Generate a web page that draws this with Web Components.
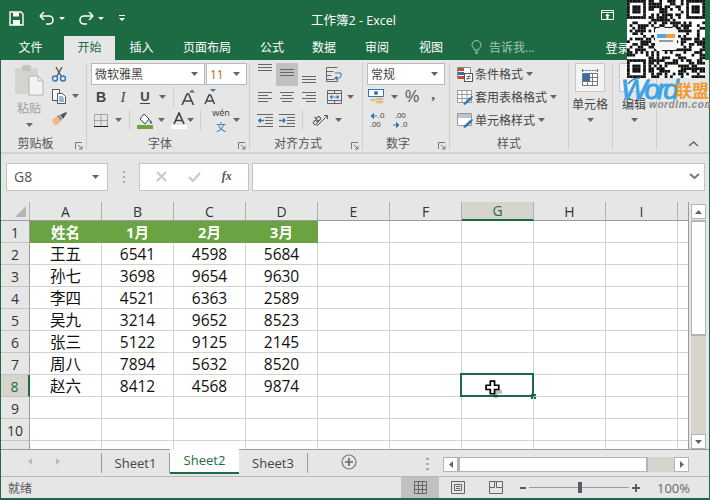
<!DOCTYPE html>
<html>
<head>
<meta charset="utf-8">
<title>工作簿2 - Excel</title>
<style>
  html, body { margin: 0; padding: 0; background: #e6e6e6; }
  body { width: 710px; height: 500px; overflow: hidden; font-family: "Open Sans", "Noto Sans CJK SC", sans-serif; }
</style>
</head>
<body>
<excel-window></excel-window>
<script>
const CJK = '"Open Sans", "Noto Sans CJK SC", sans-serif';

const ICONS = {
  paste: `<svg width="30" height="32" viewBox="0 0 30 32"><rect x="1" y="4" width="23" height="26" rx="2" fill="#d4d4cc"/><rect x="8" y="1" width="9" height="6" rx="1.5" fill="#c4c4bc"/><path d="M15 12h9l5 5v14H15z" fill="#f2f2f2" stroke="#b8b0b8"/><path d="M24 12v5h5" fill="none" stroke="#b8b0b8"/></svg>`,
  cut: `<svg width="16" height="16" viewBox="0 0 16 16"><path d="M5 1l5 9M11 1L6 10" stroke="#555" stroke-width="1.4" fill="none"/><circle cx="4" cy="12.5" r="2.5" fill="none" stroke="#2f77b5" stroke-width="1.4"/><circle cx="12" cy="12.5" r="2.5" fill="none" stroke="#2f77b5" stroke-width="1.4"/></svg>`,
  copy: `<svg width="16" height="16" viewBox="0 0 16 16"><path d="M1.5 1.5h7v11h-7z" fill="#fff" stroke="#555"/><path d="M6.5 5.5h5l3 3v7h-8z" fill="#fff" stroke="#555"/><path d="M8 9h4M8 11h5M8 13h5" stroke="#3a6ea5"/></svg>`,
  brush: `<svg width="17" height="15" viewBox="0 0 17 15"><path d="M1 9l5-4 4 5-4 4H3z" fill="#e9bd7c"/><path d="M6 5l2-1 3 4-1 2z" fill="#888"/><path d="M9 4l6-3 1 1-4 6z" fill="#555"/></svg>`,
  launcher: `<svg width="8" height="8" viewBox="0 0 8 8"><path d="M.5 7V.5H7" fill="none" stroke="#777"/><path d="M3 3l4 4M7 4v3H4" fill="none" stroke="#777"/></svg>`,
  caret: `<svg width="7" height="4" viewBox="0 0 7 4"><path d="M0 0h7L3.500 4z" fill="#666"/></svg>`,
  bold: `<span style="font:700 14px 'Liberation Sans',sans-serif;color:#444">B</span>`,
  italic: `<span style="font:italic 400 15px 'Liberation Serif',serif;color:#444">I</span>`,
  under: `<span style="font:700 13px 'Liberation Sans',sans-serif;color:#444;border-bottom:1.5px solid #444;line-height:13px">U</span>`,
  growA: `<svg width="16" height="17" viewBox="0 0 16 17"><path d="M1 16L6 5h1.500l5 11M3 12h7.500" fill="none" stroke="#444" stroke-width="1.600"/><path d="M8 3l3-3 3 3z" transform="translate(0 .5)" fill="#2f77b5"/></svg>`,
  shrinkA: `<svg width="14" height="16" viewBox="0 0 14 16"><path d="M1 15L5 6h1.500l4 9M2.500 12h6" fill="none" stroke="#444" stroke-width="1.500"/><path d="M6 0h6L9 3z" fill="#2f77b5"/></svg>`,
  borders: `<svg width="14" height="13" viewBox="0 0 14 13"><path d="M.5.500h13v12H.500zM7 .500v12M.500 6.500h13" fill="none" stroke="#666" stroke-dasharray="1 1"/><path d="M0 12.500h14" stroke="#222"/></svg>`,
  fill: `<svg width="16" height="17" viewBox="0 0 16 17"><path d="M3 7l4-5 5 5-4 5z" fill="#fff" stroke="#444"/><path d="M12 7c2 1 3 3 3 4 0 1-2 1-2 0z" fill="#3a6ea5"/><rect x="0" y="13" width="16" height="4" fill="#70a440"/></svg>`,
  fontA: `<svg width="16" height="17" viewBox="0 0 16 17"><path d="M3 12L8 1l5 11M4.500 8.500h7" fill="none" stroke="#444" stroke-width="1.700"/><rect y="13" width="16" height="4" fill="#fff"/></svg>`,
  wen: `<span style="display:flex;flex-direction:column;align-items:center;line-height:9px"><span style="font:9px 'Noto Sans',sans-serif;color:#444">wén</span><span style="font:10px 'Noto Sans CJK SC';color:#2f77b5">文</span></span>`,
  alignTop: `<svg width="14" height="12" viewBox="0 0 14 12"><path d="M0 .500h14M0 3.500h14M0 6.500h14" stroke="#666"/></svg>`,
  alignMid: `<svg width="14" height="10" viewBox="0 0 14 10"><path d="M0 .500h14M0 3.500h14M0 6.500h14" stroke="#666"/></svg>`,
  alignBot: `<svg width="14" height="8" viewBox="0 0 14 8"><path d="M0 .500h14M0 3.500h14M0 6.500h14" stroke="#666"/></svg>`,
  left: `<svg width="14" height="10" viewBox="0 0 14 10"><path d="M0 .500h14M0 3.500h10M0 6.500h14M0 9.500h10" stroke="#666"/></svg>`,
  center: `<svg width="14" height="10" viewBox="0 0 14 10"><path d="M0 .500h14M2 3.500h10M0 6.500h14M2 9.500h10" stroke="#666"/></svg>`,
  right: `<svg width="14" height="10" viewBox="0 0 14 10"><path d="M0 .500h14M4 3.500h10M0 6.500h14M4 9.500h10" stroke="#666"/></svg>`,
  wrap: `<svg width="16" height="15" viewBox="0 0 16 15"><path d="M.5.500h11M.500 4.500h7M.500 8.500h5M.500 12.500h8M.500.500v14h11v-3" fill="none" stroke="#666"/><path d="M9 6h6v3a2 2 0 0 1-2 2H9" fill="none" stroke="#2f77b5"/><path d="M11 9l-3 2 3 2z" fill="#2f77b5"/></svg>`,
  merge: `<svg width="15" height="14" viewBox="0 0 15 14"><path d="M.5.500h14v13H.500zM.500 3.500h14M.500 10.500h14M7.500.5v3M7.500 10.500v3" fill="none" stroke="#666"/><path d="M3 7h9M3 7l2-1.500v3zM12 7l-2-1.500v3z" fill="#2f77b5" stroke="#2f77b5" stroke-width=".7"/></svg>`,
  outdent: `<svg width="16" height="13" viewBox="0 0 16 13"><path d="M0 .500h16M8 3.500h8M8 6.500h8M8 9.500h8M0 12.500h16" stroke="#666"/><path d="M1 6.500h6" stroke="#2f77b5" stroke-width="1.500"/><path d="M1 6.500l3-3v6z" fill="#2f77b5"/></svg>`,
  indent: `<svg width="16" height="13" viewBox="0 0 16 13"><path d="M0 .500h16M8 3.500h8M8 6.500h8M8 9.500h8M0 12.500h16" stroke="#666"/><path d="M0 6.500h6" stroke="#2f77b5" stroke-width="1.500"/><path d="M7 6.500l-3-3v6z" fill="#2f77b5"/></svg>`,
  orient: `<svg width="18" height="15" viewBox="0 0 18 15"><g transform="rotate(-40 6 7)" fill="none" stroke="#555"><circle cx="3" cy="8" r="2"/><path d="M6 3v7M6 7a2 2 0 1 1 4 0 2 2 0 1 1-4 0" /></g><path d="M6 13L16 3M13 2.500h3.500V6" fill="none" stroke="#555"/></svg>`,
  money: `<svg width="17" height="17" viewBox="0 0 17 17"><rect x=".5" y=".5" width="15" height="7" fill="#fff" stroke="#2f77b5"/><circle cx="8" cy="4" r="2" fill="#2f77b5"/><ellipse cx="11.500" cy="10" rx="4" ry="1.500" fill="#e9bd7c"/><ellipse cx="11.500" cy="13" rx="4" ry="1.500" fill="#e9bd7c"/><ellipse cx="5" cy="11" rx="3" ry="1.300" fill="#e9bd7c"/></svg>`,
  percent: `<span style="font:16px 'Liberation Sans',sans-serif;color:#555">%</span>`,
  comma: `<span style="font:700 15px 'Liberation Serif',serif;color:#6a4a6a;line-height:12px;padding-bottom:6px">,</span>`,
  decUp: `<span style="display:grid;grid-template-columns:auto auto;font:8px/9px 'Liberation Sans',sans-serif;color:#444;align-items:center"><svg width="7" height="6" viewBox="0 0 7 6"><path d="M1 3h6M1 3l2.500-2.500v5z" fill="#2f77b5" stroke="#2f77b5"/></svg><span style="padding-left:1px">.0</span><span style="grid-column:1/3">.00</span></span>`,
  decDown: `<span style="display:grid;grid-template-columns:auto auto;font:8px/9px 'Liberation Sans',sans-serif;color:#444;align-items:center"><span style="grid-column:1/3;padding-left:2px">.00</span><svg width="7" height="6" viewBox="0 0 7 6"><path d="M0 3h6M6 3L3.500.5v5z" fill="#2f77b5" stroke="#2f77b5"/></svg><span style="padding-left:1px">.0</span></span>`,
  cond: `<svg width="16" height="15" viewBox="0 0 16 15"><path d="M.5.500h13v11H.500z" fill="#fff" stroke="#888"/><path d="M1 1h6v3H1z" fill="#c0503a"/><path d="M1 5h6v3H1z" fill="#3a6ea5"/><path d="M1 9h6v3H1z" fill="#c0503a"/><rect x="7.500" y="6.500" width="8" height="8" fill="#fff" stroke="#555"/><path d="M9.500 9.500h4M9.500 11.500h4M10 13l3-5" stroke="#444" stroke-width=".7"/></svg>`,
  table: `<svg width="16" height="15" viewBox="0 0 16 15"><path d="M.5.500h14v12H.500zM5 .500v12M10 .500v12M.500 4.500h14M.500 8.500h14" fill="#fff" stroke="#999"/><path d="M6 14l6-6 3-2 1 1-2 3-6 5z" fill="#2f77b5"/></svg>`,
  cellstyle: `<svg width="16" height="15" viewBox="0 0 16 15"><path d="M.5.500h14v12H.500z" fill="#fff" stroke="#999"/><path d="M1 1h13v4H1z" fill="#b8c4d0"/><path d="M6 14l6-6 3-2 1 1-2 3-6 5z" fill="#2f77b5"/></svg>`,
  cells: `<svg width="20" height="19" viewBox="0 0 20 19"><path d="M2.500 1v3M17.500 1v3" stroke="#2f77b5"/><path d="M2.500 2.500h15" stroke="#2f77b5" stroke-dasharray="2 1"/><path d="M2.500 5.500h15v12h-15zM2.500 9.500h15M2.500 13.500h15M7.500 5.500v12M12.500 5.500v12" fill="#fff" stroke="#777"/><rect x="3" y="6" width="7" height="7" fill="#3a6ea5"/></svg>`,
  up: `<svg width="11" height="6" viewBox="0 0 11 6"><path d="M1 5l4.500-4L10 5" fill="none" stroke="#666" stroke-width="1.500"/></svg>`
};

// small icon cell used all over the ribbon
class RbBtn extends HTMLElement {
  connectedCallback() {
    const w = this.getAttribute('w') || 22;
    const h = this.getAttribute('h') || 22;
    this.attachShadow({ mode: 'open' }).innerHTML = `
      <style>
        :host { display: flex; align-items: center; justify-content: center; width: ${w}px; height: ${h}px; flex: none; }
        :host([on]) { background: #c0c0c0; }
        svg { display: block; }
      </style>${ICONS[this.getAttribute('icon')]}`;
  }
}
customElements.define('rb-btn', RbBtn);

class RbGroup extends HTMLElement {
  connectedCallback() {
    const launcher = this.hasAttribute('launcher');
    this.attachShadow({ mode: 'open' }).innerHTML = `
      <style>
        :host { display: flex; flex-direction: column; flex: none; box-sizing: border-box; width: ${this.getAttribute('w')}px; height: 87px; border-right: 1px solid #cfcfc9; position: relative; }
        .body { flex: 1; min-height: 0; }
        .label { height: 16px; line-height: 19px; font-size: 12px; color: #555; text-align: center; display: flex; justify-content: center; position: relative; padding-right: ${launcher ? 16 : 0}px; box-sizing: border-box; }
        .launch { position: absolute; right: 3px; top: 8px; display: flex; }
      </style>
      <div class="body"><slot></slot></div>
      <div class="label">${this.getAttribute('label') || ''}
        ${launcher ? `<span class="launch">${ICONS.launcher}</span>` : ''}
      </div>`;
  }
}
customElements.define('rb-group', RbGroup);

class RbCombo extends HTMLElement {
  connectedCallback() {
    this.attachShadow({ mode: 'open' }).innerHTML = `
      <style>
        :host { display: flex; align-items: center; box-sizing: border-box; height: 22px; width: ${this.getAttribute('w')}px; background: #fff; border: 1px solid #b9b9b9; padding: 0 6px 0 3px; font-size: 12px; color: #444; flex: none; }
        span { flex: 1; white-space: nowrap; }
      </style>
      <span><slot></slot></span>${ICONS.caret}`;
  }
}
customElements.define('rb-combo', RbCombo);

class XRibbon extends HTMLElement {
  connectedCallback() {
    this.attachShadow({ mode: 'open' }).innerHTML = `
      <style>
        :host { display: flex; height: 94px; box-sizing: border-box; background: #e6e6e6; border-bottom: 2px solid #d2d2d2; padding-top: 3px; position: relative; font-family: ${CJK}; }
        .row { display: flex; align-items: center; height: 22px; }
        .sep { width: 1px; height: 20px; background: #cfcfc9; flex: none; }
        .cr { width: 12px; flex: none; display: flex; justify-content: center; }
        .txt { font-size: 12px; color: #444; white-space: nowrap; }
        .clip { display: flex; padding-left: 13px; }
        .pastecol { width: 30px; display: flex; flex-direction: column; align-items: center; }
        .pastecol .txt { color: #a0a0a0; margin-top: 4px; line-height: 16px; }
        .big { display: flex; flex-direction: column; align-items: center; padding-right: 1px; }
        .bigbox { width: 30px; height: 29px; background: #f4f4f4; border: 1px solid #c6c6c6; box-sizing: border-box; display: flex; align-items: center; justify-content: center; }
        .big .txt { margin-top: 5px; line-height: 16px; }
        .big .cr { margin-top: 5px; width: auto; }
        .up { position: absolute; right: 10px; bottom: 5px; display: flex; }
      </style>
      <rb-group w="86" label="剪贴板" launcher style="margin-left:0">
        <div class="clip">
          <div class="pastecol">
            <rb-btn icon="paste" w="30" h="34"></rb-btn>
            <span class="txt">粘贴</span>
            <span class="cr" style="margin-top:6px">${ICONS.caret}</span>
          </div>
          <div style="margin-left:5px">
            <rb-btn icon="cut" w="20" h="23" style="margin-top:-1px"></rb-btn>
            <div class="row"><rb-btn icon="copy" w="20"></rb-btn><span class="cr">${ICONS.caret}</span></div>
            <rb-btn icon="brush" w="20"></rb-btn>
          </div>
        </div>
      </rb-group>
      <rb-group w="163" label="字体" launcher>
        <div class="row" style="padding-left:4px">
          <rb-combo w="114">微软雅黑</rb-combo>
          <rb-combo w="41" style="margin-left:1px;color:#b06a20">11</rb-combo>
        </div>
        <div class="row" style="padding-left:3px;margin-top:1px">
          <rb-btn icon="bold"></rb-btn><rb-btn icon="italic"></rb-btn><rb-btn icon="under"></rb-btn>
          <span class="cr">${ICONS.caret}</span>
          <span class="sep" style="margin:0 0 0 5px"></span>
          <rb-btn icon="growA" w="30"></rb-btn><rb-btn icon="shrinkA" w="14"></rb-btn>
        </div>
        <div class="row" style="padding-left:3px;margin-top:1px">
          <rb-btn icon="borders"></rb-btn><span class="cr">${ICONS.caret}</span>
          <span class="sep" style="margin:0 4px 0 5px"></span>
          <rb-btn icon="fill"></rb-btn><span class="cr" style="margin-left:-1px">${ICONS.caret}</span>
          <rb-btn icon="fontA" style="margin-left:1px"></rb-btn><span class="cr" style="margin-left:-6px">${ICONS.caret}</span>
          <span class="sep" style="margin:0 10px 0 4px"></span>
          <rb-btn icon="wen" w="20"></rb-btn><span class="cr" style="margin-left:-1px">${ICONS.caret}</span>
        </div>
      </rb-group>
      <rb-group w="113" label="对齐方式" launcher>
        <div class="row" style="padding-left:4px">
          <rb-btn icon="alignTop" style="align-items:flex-start;height:20px"></rb-btn>
          <rb-btn icon="alignMid" on style="height:23px"></rb-btn>
          <rb-btn icon="alignBot" style="align-items:flex-end;height:19px"></rb-btn>
          <rb-btn icon="wrap" w="16" style="margin-left:6px"></rb-btn>
        </div>
        <div class="row" style="padding-left:4px;margin-top:1px">
          <rb-btn icon="left"></rb-btn><rb-btn icon="center"></rb-btn><rb-btn icon="right"></rb-btn>
          <rb-btn icon="merge" w="16" style="margin-left:6px"></rb-btn><span class="cr" style="margin-left:2px">${ICONS.caret}</span>
        </div>
        <div class="row" style="padding-left:4px;margin-top:1px">
          <rb-btn icon="outdent"></rb-btn><rb-btn icon="indent"></rb-btn>
          <span class="sep" style="margin-left:4px"></span>
          <rb-btn icon="orient" w="26" style="margin-left:4px"></rb-btn><span class="cr" style="margin-left:-1px">${ICONS.caret}</span>
        </div>
      </rb-group>
      <rb-group w="87" label="数字" launcher>
        <div class="row" style="padding-left:4px"><rb-combo w="78">常规</rb-combo></div>
        <div class="row" style="padding-left:4px;margin-top:1px">
          <rb-btn icon="money" w="18"></rb-btn><span class="cr" style="margin-left:3px">${ICONS.caret}</span>
          <rb-btn icon="percent" style="margin-left:1px"></rb-btn><rb-btn icon="comma" w="20"></rb-btn>
        </div>
        <div class="row" style="padding-left:3px;margin-top:1px">
          <rb-btn icon="decUp"></rb-btn><rb-btn icon="decDown" style="margin-left:1px"></rb-btn>
        </div>
      </rb-group>
      <rb-group w="119" label="样式">
        <div class="row" style="padding-left:5px"><rb-btn icon="cond" w="20"></rb-btn><span class="txt">条件格式</span><span class="cr">${ICONS.caret}</span></div>
        <div class="row" style="padding-left:5px;margin-top:1px"><rb-btn icon="table" w="20"></rb-btn><span class="txt">套用表格格式</span><span class="cr">${ICONS.caret}</span></div>
        <div class="row" style="padding-left:5px;margin-top:1px"><rb-btn icon="cellstyle" w="20"></rb-btn><span class="txt">单元格样式</span><span class="cr">${ICONS.caret}</span></div>
      </rb-group>
      <rb-group w="44">
        <div class="big"><div class="bigbox"><rb-btn icon="cells" w="22" h="22"></rb-btn></div><span class="txt">单元格</span><span class="cr">${ICONS.caret}</span></div>
      </rb-group>
      <rb-group w="44">
        <div class="big"><div class="bigbox"></div><span class="txt">编辑</span><span class="cr">${ICONS.caret}</span></div>
      </rb-group>
      <span class="up">${ICONS.up}</span>`;
  }
}
customElements.define('x-ribbon', XRibbon);

class XTitlebar extends HTMLElement {
  connectedCallback() {
    this.attachShadow({ mode: 'open' }).innerHTML = `
      <style>
        :host { display: flex; align-items: center; height: 36px; background: #1d6b43; color: #fff; font-family: ${CJK}; position: relative; flex: none; }
        .qa { display: flex; align-items: center; padding-left: 8px; }
        .title { position: absolute; left: 0; right: 0; top: 10px; text-align: center; font-size: 12.500px; padding-right: 3px; }
        svg { display: block; }
        .restore { position: absolute; left: 600px; top: 10px; }
      </style>
      <div class="qa">
        <svg width="15" height="15" viewBox="0 0 15 15"><path d="M1 1h11l2 2v11H1z" fill="none" stroke="#fff" stroke-width="1.400"/><path d="M4 1.500h6v4H4zM4 9h7v5H4z" fill="#fff"/></svg>
        <svg style="margin-left:15px" width="16" height="14" viewBox="0 0 16 14"><path d="M2 5h8a4 4 0 0 1 0 8H7" fill="none" stroke="#fff" stroke-width="1.600"/><path d="M1 5l4-4M1 5l4 4" stroke="#fff" stroke-width="1.600"/></svg>
        <svg style="margin-left:4px" width="6" height="3" viewBox="0 0 6 3"><path d="M0 0h6L3 3z" fill="#fff"/></svg>
        <svg style="margin-left:13px" width="16" height="14" viewBox="0 0 16 14"><path d="M14 5H6a4 4 0 0 0 0 8h3" fill="none" stroke="#fff" stroke-width="1.600"/><path d="M15 5l-4-4M15 5l-4 4" stroke="#fff" stroke-width="1.600"/></svg>
        <svg style="margin-left:4px" width="6" height="3" viewBox="0 0 6 3"><path d="M0 0h6L3 3z" fill="#fff"/></svg>
        <svg style="margin-left:15px" width="6" height="7" viewBox="0 0 6 7"><path d="M0 .500h6" stroke="#fff"/><path d="M0 3h6L3 6z" fill="#fff"/></svg>
      </div>
      <div class="title">工作簿2 - Excel</div>
      <svg class="restore" width="13" height="10" viewBox="0 0 13 10"><path d="M.5.500h12v9H.500zM.500 2.500h12" fill="none" stroke="#fff"/><path d="M6.500 3.500l2.500 2.500H7.500v3h-2V6H4z" fill="#fff"/></svg>`;
  }
}
customElements.define('x-titlebar', XTitlebar);

class XTabs extends HTMLElement {
  connectedCallback() {
    const tabs = [['文件', 62, 0, 5], ['开始', 51, 1], ['插入', 53], ['页面布局', 78], ['公式', 52], ['数据', 52], ['审阅', 54], ['视图', 54]];
    this.attachShadow({ mode: 'open' }).innerHTML = `
      <style>
        :host { display: flex; height: 24px; background: #1d6b43; color: #fff; font-family: ${CJK}; font-size: 12px; flex: none; padding-left: 1px; }
        .t { display: flex; align-items: center; justify-content: center; flex: none; padding-bottom: 2px; box-sizing: border-box; }
        .t.on { background: #e6e6e6; color: #1d6b43; }
        .tell { display: flex; align-items: center; color: #a9c6b5; margin-left: 13px; padding-bottom: 2px; }
        .tell span { margin-left: 7px; }
        .login { margin-left: 71px; padding-top: 3px; }
      </style>
      ${tabs.map(t => `<div class="t${t[2] ? ' on' : ''}" style="width:${t[1]}px;padding-right:${t[3] || 0}px">${t[0]}</div>`).join('')}
      <div class="tell">
        <svg width="11" height="14" viewBox="0 0 11 14"><path d="M3.500 10C3 8 1 7 1 5a4.500 4.500 0 0 1 9 0c0 2-2 3-2.500 5zM4 12h3M4.500 13.500h2" fill="none" stroke="#a9c6b5"/></svg>
        <span>告诉我...</span>
      </div>
      <div class="login">登录</div>`;
  }
}
customElements.define('x-tabs', XTabs);

class XFormula extends HTMLElement {
  connectedCallback() {
    this.attachShadow({ mode: 'open' }).innerHTML = `
      <style>
        :host { display: flex; align-items: center; height: 48px; background: #e6e6e6; padding: 0 0 3px 5px; box-sizing: border-box; flex: none; font-family: ${CJK}; }
        .box { height: 28px; box-sizing: border-box; background: #fff; border: 1px solid #c4c4c4; display: flex; align-items: center; flex: none; }
        .name { width: 102px; padding: 0 8px 0 7px; font-size: 14px; color: #555; justify-content: space-between; }
        .dots { width: 31px; display: flex; justify-content: center; }
        .btns { width: 110px; justify-content: space-around; padding: 0 6px; }
        .input { width: 453px; margin-left: 3px; justify-content: flex-end; padding-right: 4px; }
        .fx { font: italic 700 12px "Liberation Serif", serif; color: #555; }
      </style>
      <div class="box name">G8 ${ICONS.caret}</div>
      <div class="dots"><svg width="3" height="12" viewBox="0 0 3 12"><path d="M1 0h2v2H1zM1 5h2v2H1zM1 10h2v2H1z" fill="#aaa"/></svg></div>
      <div class="box btns">
        <svg width="11" height="11" viewBox="0 0 11 11"><path d="M1 1l9 9M10 1l-9 9" stroke="#c6c6c6" stroke-width="1.800"/></svg>
        <svg width="13" height="10" viewBox="0 0 13 10"><path d="M1 5l4 4 7-8" fill="none" stroke="#c6c6c6" stroke-width="2"/></svg>
        <span class="fx">fx</span>
      </div>
      <div class="box input"><svg width="11" height="7" viewBox="0 0 11 7"><path d="M1 1l4.500 4L10 1" fill="none" stroke="#777" stroke-width="2"/></svg></div>`;
  }
}
customElements.define('x-formula', XFormula);

class XSheet extends HTMLElement {
  connectedCallback() {
    const cols = ['A', 'B', 'C', 'D', 'E', 'F', 'G', 'H', 'I', ''];
    const data = [
      ['姓名', '1月', '2月', '3月'],
      ['王五', 6541, 4598, 5684], ['孙七', 3698, 9654, 9630], ['李四', 4521, 6363, 2589],
      ['吴九', 3214, 9652, 8523], ['张三', 5122, 9125, 2145], ['周八', 7894, 5632, 8520],
      ['赵六', 8412, 4568, 9874]
    ];
    let cells = '<div class="corner"><svg width="11" height="11" viewBox="0 0 11 11"><path d="M11 0v11H0z" fill="#b4b4b4"/></svg></div>';
    cols.forEach(c => { cells += `<div class="ch${c === 'G' ? ' sel' : ''}${c === '' ? ' end' : ''}">${c}</div>`; });
    for (let r = 0; r < 11; r++) {
      cells += `<div class="rh${r === 7 ? ' sel' : ''}">${r < 10 ? r + 1 : ''}</div>`;
      cols.forEach((c, i) => {
        const v = data[r] && i < 4 ? data[r][i] : '';
        const isSel = r === 7 && c === 'G';
        cells += `<div class="c${r === 0 && i < 4 ? ' head' : ''}${c === '' ? ' end' : ''}">${v}${isSel ? `
          <div class="selbox"></div><div class="handle"></div>
          <svg class="cur" width="19" height="19" viewBox="0 0 18 18"><path d="M7 3h4v4h4v4h-4v4H7v-4H3V7h4z" fill="#000" opacity=".25" transform="translate(2 2)"/><path d="M6 1h4v4h4v4h-4v4H6V9H2V5h4z" fill="#fff" stroke="#000" stroke-width="1.600"/></svg>` : ''}</div>`;
      });
    }
    this.attachShadow({ mode: 'open' }).innerHTML = `
      <style>
        :host { display: flex; flex: 1; min-height: 0; background: #e6e6e6; font-family: ${CJK}; }
        .grid { display: grid; grid-template-columns: 29px repeat(9, 72px) 10px; grid-template-rows: 19px repeat(11, 22px); width: 687px; height: 247px; overflow: hidden; background: #fff; border-right: 1px solid #9b9b9b; flex: none; }
        .corner { background: #e6e6e6; border-bottom: 1px solid #9b9b9b; display: flex; align-items: flex-end; justify-content: flex-end; padding: 0 3px 3px 0; box-sizing: border-box; border-right: 1px solid #b0b0b0; }
        .ch { background: #e6e6e6; border-bottom: 1px solid #9b9b9b; border-right: 1px solid #b0b0b0; box-sizing: border-box; display: flex; align-items: center; justify-content: center; font-size: 14px; color: #333; }
        .ch.sel { background: #d5d5cd; border-bottom: 2px solid #1d6b43; color: #1d6b43; }
        .ch.end { border-right: 0; }
        .rh { background: #e6e6e6; border-bottom: 1px solid #c4c4c4; border-right: 1px solid #9b9b9b; box-sizing: border-box; display: flex; align-items: center; justify-content: center; font-size: 14px; color: #333; padding-top: 2px; }
        .rh.sel { background: #d5d5cd; border-right: 2px solid #1d6b43; color: #1d6b43; }
        .c { border-right: 1px solid #d4d4cd; border-bottom: 1px solid #d4d4cd; box-sizing: border-box; display: flex; align-items: center; justify-content: center; font-size: 15.500px; color: #111; position: relative; }
        .c.end { border-right: 0; }
        .c.head { background: #6aa342; color: #fff; font-weight: 700; font-size: 14.500px; border-color: #6aa342; }
        .selbox { position: absolute; left: -2px; top: -2px; width: 74px; height: 24px; border: 2px solid #1d6b43; box-sizing: border-box; }
        .handle { position: absolute; left: 69px; top: 19px; width: 5px; height: 5px; background: #1d6b43; }
        .cur { position: absolute; left: 22px; top: 5px; }
        .vs { width: 20px; flex: none; padding-left: 2px; box-sizing: border-box; display: flex; flex-direction: column; height: 247px; }
        .vb { width: 15px; height: 15px; background: #fff; border: 1px solid #b4b4b4; box-sizing: border-box; display: flex; align-items: center; justify-content: center; flex: none; }
        .thumb { width: 15px; height: 116px; background: #fff; border: 2px solid #b4b4b4; border-width: 2px 1px; box-sizing: border-box; flex: none; margin-top: 1px; }
        .track { flex: 1; width: 15px; background: #d5d5cd; }
      </style>
      <div class="grid">${cells}</div>
      <div class="vs">
        <div class="vb" style="margin-top:2px"><svg width="7" height="4" viewBox="0 0 7 4"><path d="M0 4h7L3.500 0z" fill="#666"/></svg></div>
        <div class="thumb"></div>
        <div class="track"></div>
        <div class="vb"><svg width="7" height="4" viewBox="0 0 7 4"><path d="M0 0h7L3.500 4z" fill="#666"/></svg></div>
      </div>`;
  }
}
customElements.define('x-sheet', XSheet);

class XSheetTabs extends HTMLElement {
  connectedCallback() {
    this.attachShadow({ mode: 'open' }).innerHTML = `
      <style>
        :host { display: flex; height: 28px; box-sizing: border-box; background: #e6e6e6; border-top: 1px solid #9b9b9b; border-bottom: 1px solid #b8b8b8; flex: none; font-family: ${CJK}; font-size: 13px; color: #444; position: relative; }
        .nav { width: 100px; display: flex; align-items: center; padding: 0 0 3px 27px; box-sizing: border-box; }
        .t { width: 69px; height: 20px; margin-top: 3px; border-right: 1px solid #9b9b9b; box-sizing: border-box; display: flex; align-items: center; justify-content: center; flex: none; }
        .t.first { border-left: 1px solid #9b9b9b; width: 69px; }
        .t.on { height: 25px; margin-top: -1px; width: 69px; background: #fff; color: #1d6b43; border: 0; border-bottom: 2px solid #1d6b43; padding-bottom: 2px; }
        .plus { margin-left: 33px; display: flex; align-items: center; padding-bottom: 3px; }
        .dots { position: absolute; left: 425px; top: 8px; }
        .hs { position: absolute; left: 442px; top: 7px; display: flex; height: 15px; width: 246px; }
        .b { width: 15px; background: #fff; border: 1px solid #b4b4b4; box-sizing: border-box; display: flex; align-items: center; justify-content: center; flex: none; }
        .th { width: 190px; background: #fff; border: 1px solid #b4b4b4; border-width: 1px 2px; box-sizing: border-box; }
        .tr { flex: 1; background: #d5d5cd; }
      </style>
      <div class="nav">
        <svg width="4" height="7" viewBox="0 0 4 7"><path d="M4 0v7L0 3.500z" fill="#bcbcbc"/></svg>
        <svg style="margin-left:24px" width="4" height="7" viewBox="0 0 4 7"><path d="M0 0v7l4-3.500z" fill="#bcbcbc"/></svg>
      </div>
      <div class="t first">Sheet1</div>
      <div class="t on">Sheet2</div>
      <div class="t">Sheet3</div>
      <div class="plus"><svg width="16" height="16" viewBox="0 0 16 16"><circle cx="8" cy="8" r="7" fill="none" stroke="#777" stroke-width="1.200"/><path d="M8 4v8M4 8h8" stroke="#666" stroke-width="1.600"/></svg></div>
      <svg class="dots" width="3" height="12" viewBox="0 0 3 12"><path d="M0 0h3v2H0zM0 5h3v2H0zM0 10h3v2H0z" fill="#aaa"/></svg>
      <div class="hs">
        <div class="b"><svg width="4" height="7" viewBox="0 0 4 7"><path d="M4 0v7L0 3.500z" fill="#666"/></svg></div>
        <div class="th"></div><div class="tr"></div>
        <div class="b"><svg width="4" height="7" viewBox="0 0 4 7"><path d="M0 0v7l4-3.500z" fill="#666"/></svg></div>
      </div>`;
  }
}
customElements.define('x-sheet-tabs', XSheetTabs);

class XStatus extends HTMLElement {
  connectedCallback() {
    this.attachShadow({ mode: 'open' }).innerHTML = `
      <style>
        :host { display: flex; align-items: center; height: 21px; background: #e6e6e6; flex: none; font-family: ${CJK}; font-size: 12px; color: #555; }
        .msg { width: 400px; padding-left: 7px; box-sizing: border-box; }
        .v { width: 38px; height: 21px; display: flex; align-items: center; justify-content: center; flex: none; }
        .v.on { background: #c0c0c0; }
        .zoom { display: flex; align-items: center; margin-left: 5px; }
        .line { width: 100px; height: 1px; background: #9a9a9a; margin: 0 3px; position: relative; }
        .line i { position: absolute; left: 49px; top: -5px; width: 4px; height: 11px; background: #5a5a6a; }
        .pct { margin-left: 17px; font-size: 13px; color: #666; }
      </style>
      <div class="msg">就绪</div>
      <div class="v on"><svg width="13" height="13" viewBox="0 0 13 13"><path d="M.5.500h12v12H.500zM4.500.500v12M8.500.500v12M.500 4.500h12M.500 8.500h12" fill="none" stroke="#666"/></svg></div>
      <div class="v"><svg width="14" height="13" viewBox="0 0 14 13"><path d="M.5.500h13v12H.500zM3.500 3.500h7v6h-7zM5 5.500h4M5 7.500h4" fill="none" stroke="#666"/></svg></div>
      <div class="v"><svg width="14" height="13" viewBox="0 0 14 13"><path d="M.5.500h13v12H.500zM.500 6.500h5v-6M7.500.5v6h6" fill="none" stroke="#666"/></svg></div>
      <div class="zoom">
        <svg width="6" height="2" viewBox="0 0 6 2"><path d="M0 0h6v2H0z" fill="#5a5a6a"/></svg>
        <div class="line"><i></i></div>
        <svg width="8" height="8" viewBox="0 0 8 8"><path d="M3 0h2v3h3v2H5v3H3V5H0V3h3z" fill="#5a5a6a"/></svg>
      </div>
      <div class="pct">100%</div>`;
  }
}
customElements.define('x-status', XStatus);

// watermark pasted over the top right corner of the window
class XWatermark extends HTMLElement {
  connectedCallback() {
    const n = 29;
    let seed = 20170;
    const rnd = () => (seed = (seed * 1103515245 + 12345) & 0x7fffffff) / 0x7fffffff;
    const finder = (x, y) => x === 0 || y === 0 || x === 6 || y === 6 || (x > 1 && x < 5 && y > 1 && y < 5);
    let rects = '';
    for (let y = 0; y < n; y++) for (let x = 0; x < n; x++) {
      const inTL = x < 8 && y < 8, inTR = x > n - 9 && y < 8, inBL = x < 8 && y > n - 9;
      let on;
      if (inTL) on = x < 7 && y < 7 && finder(x, y);
      else if (inTR) on = x > n - 8 && y < 7 && finder(x - (n - 7), y);
      else if (inBL) on = x < 7 && y > n - 8 && finder(x, y - (n - 7));
      else on = rnd() > 0.5;
      if (on) rects += `<rect x="${x}" y="${y}" width="1.020" height="1.020"/>`;
    }
    this.attachShadow({ mode: 'open' }).innerHTML = `
      <style>
        :host { position: absolute; left: 627px; top: 0; width: 83px; height: 112px; display: block; }
        .qr { position: absolute; left: 0; top: 0; width: 78px; height: 78px; background: #fff; display: block; filter: blur(.3px); }
        .logo { position: absolute; left: 28px; top: 28px; width: 22px; height: 22px; background: #f5f5f5; border-radius: 2px; }
        .logo i { display: block; height: 4px; margin: 6px 2px 2px; background: linear-gradient(90deg, #4aa8e0 50%, #f0a040 50%); }
        .logo b { display: block; height: 2px; margin: 0 4px; background: #999; }
        .word { position: absolute; left: -6px; top: 74px; font: italic 400 28px/32px "Liberation Sans", sans-serif; letter-spacing: -3px; color: #3ba3e4; white-space: nowrap; -webkit-text-stroke: .9px #3ba3e4; }
        .hook { position: absolute; left: 0; top: 77px; }
        .lm { position: absolute; left: 48px; top: 78px; font: 700 17px/24px "Noto Sans CJK SC", sans-serif; color: #f29a2e; white-space: nowrap; }
        .url { position: absolute; left: 22px; top: 99px; font: italic 700 10px/12px "Liberation Sans", sans-serif; letter-spacing: .6px; color: #8a8a8a; white-space: nowrap; }
      </style>
      <svg class="qr" viewBox="0 0 29 29" preserveAspectRatio="none" fill="#111">${rects}</svg>
      <div class="logo"><i></i><b></b></div>
      <svg class="hook" width="14" height="8" viewBox="0 0 14 8"><path d="M1 7c3-4 7-6 12-6" fill="none" stroke="#3b7fc0" stroke-width="1.500"/></svg>
      <div class="word">Word</div>
      <div class="lm">联盟</div>
      <div class="url">wordlm.com</div>`;
  }
}
customElements.define('x-watermark', XWatermark);

class ExcelWindow extends HTMLElement {
  connectedCallback() {
    this.attachShadow({ mode: 'open' }).innerHTML = `
      <style>
        :host { display: block; width: 710px; height: 500px; position: relative; overflow: hidden; }
        .win { display: flex; flex-direction: column; width: 710px; height: 500px; box-sizing: border-box; border: 1px solid #1d6b43; border-width: 0 1px 2px; background: #e6e6e6; }
      </style>
      <div class="win">
        <x-titlebar></x-titlebar>
        <x-tabs></x-tabs>
        <x-ribbon></x-ribbon>
        <x-formula></x-formula>
        <x-sheet></x-sheet>
        <x-sheet-tabs></x-sheet-tabs>
        <x-status></x-status>
      </div>
      <x-watermark></x-watermark>`;
  }
}
customElements.define('excel-window', ExcelWindow);
</script>
</body>
</html>
